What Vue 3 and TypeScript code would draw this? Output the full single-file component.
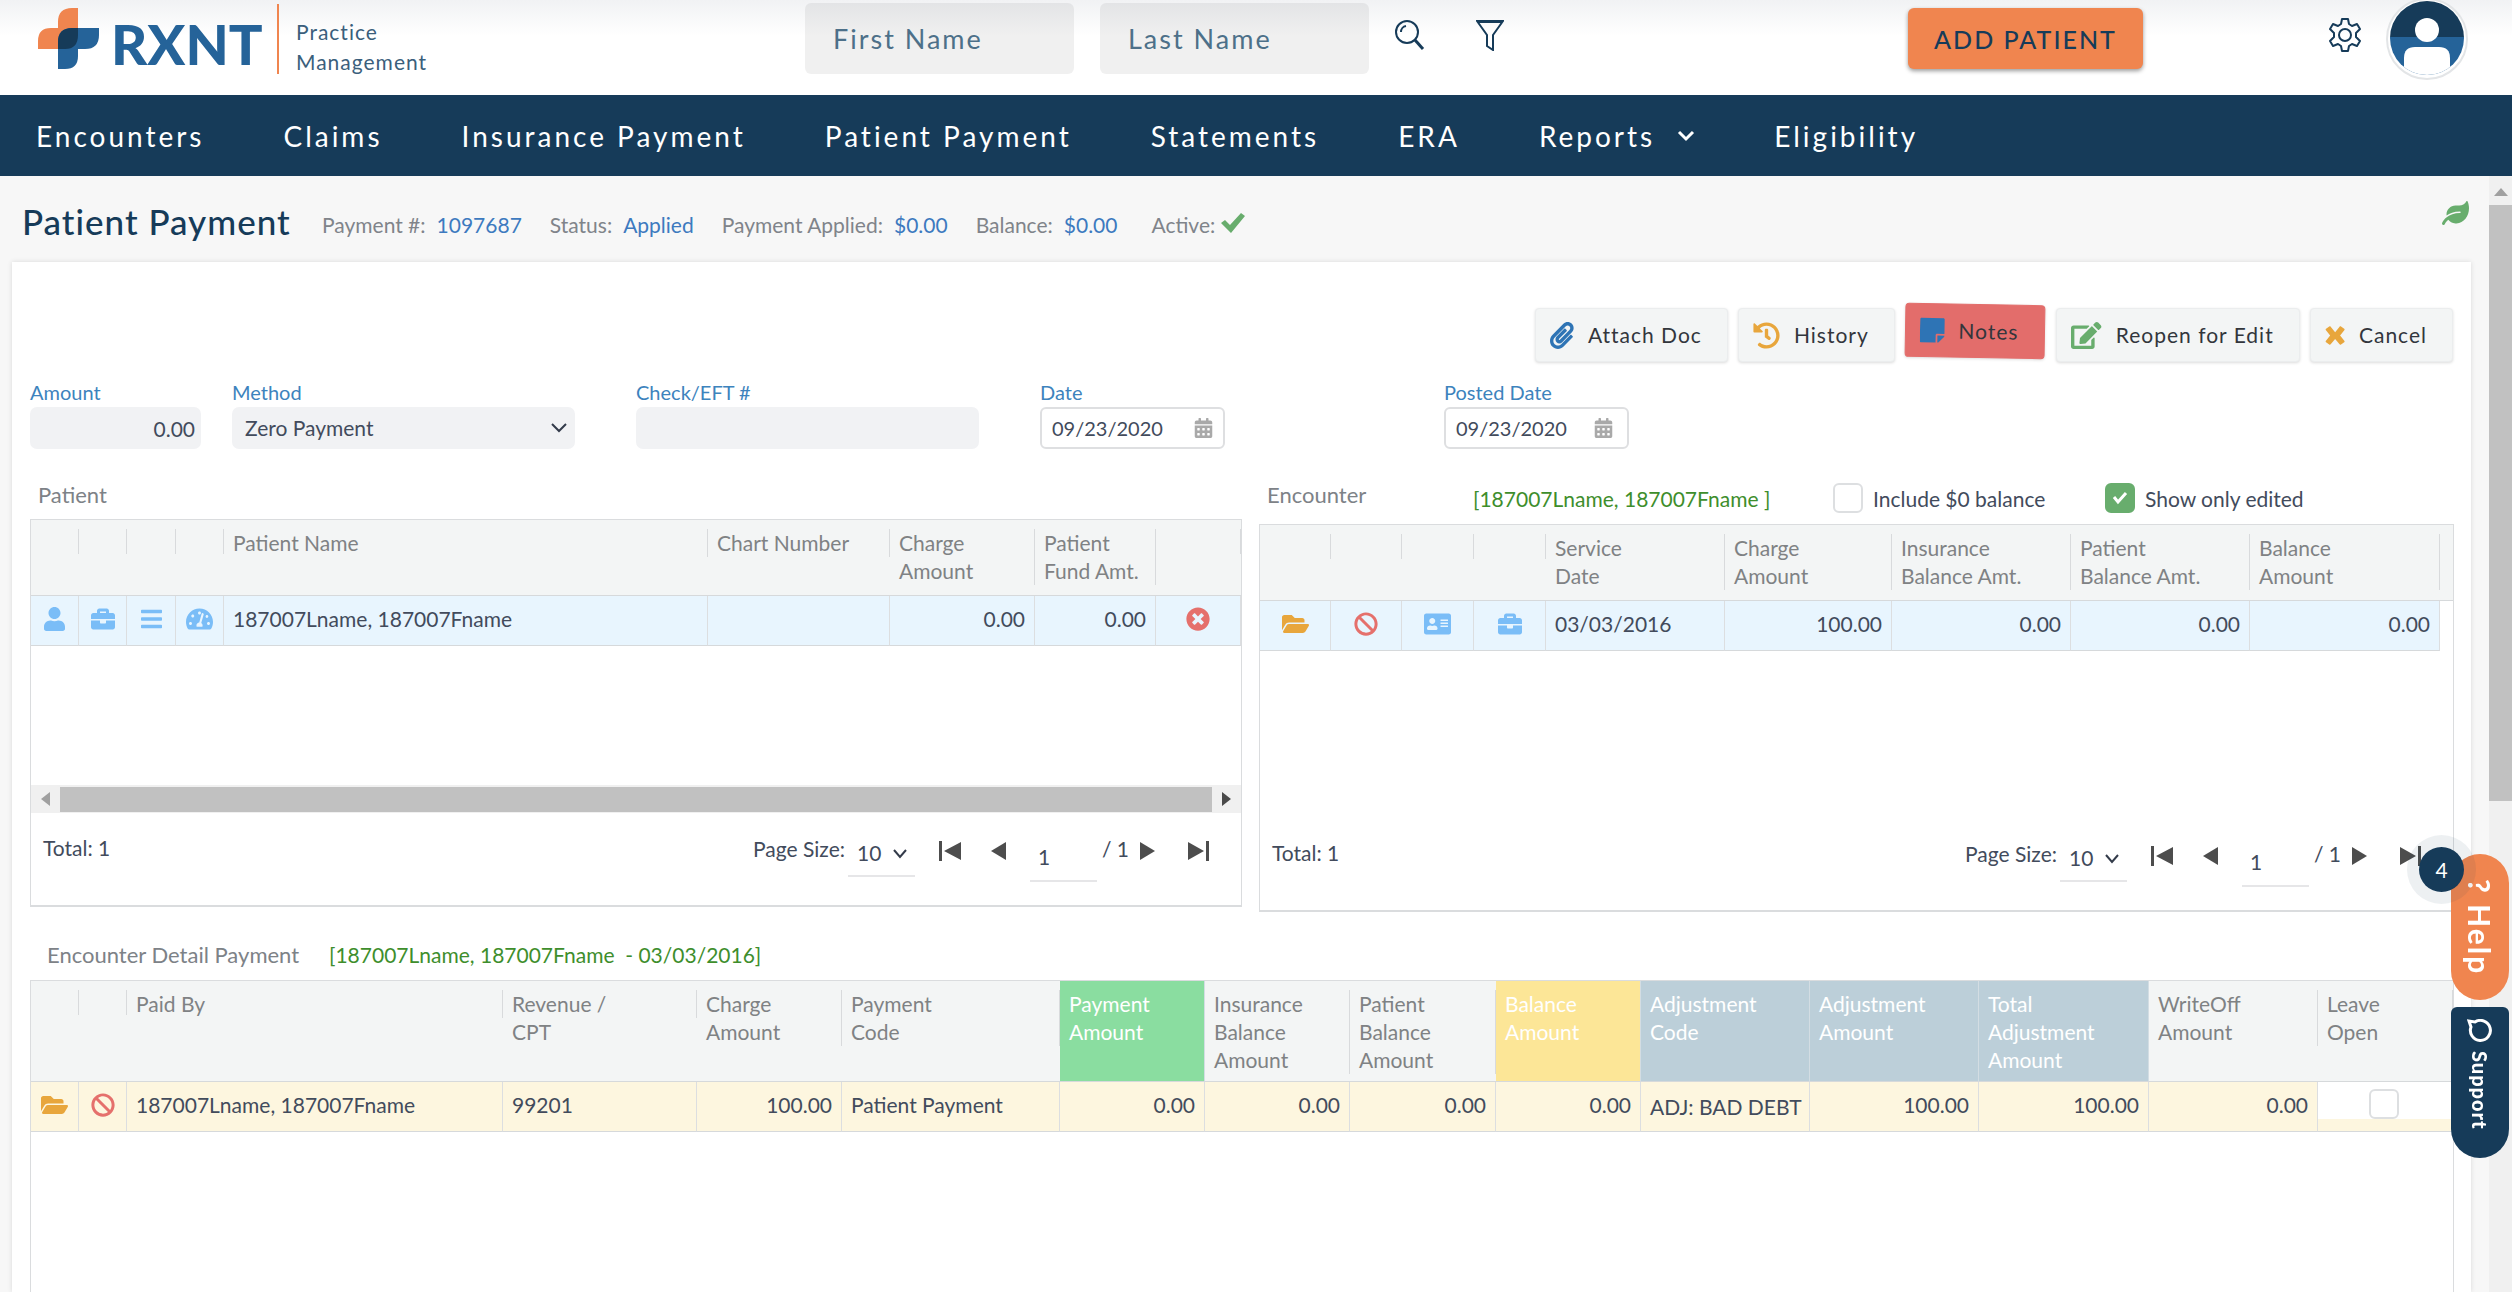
<script setup lang="ts">
import { ref } from 'vue'

interface Glyph {
  w: number
  d: string
}
interface Column {
  lines: string[]
  width?: number
  tone?: string
  short?: boolean
}
interface Cell {
  text?: string
  icon?: string
  tone?: string
  label?: string
  num?: boolean
  low?: boolean
  check?: boolean
}

const dot = (x: number, y: number) =>
  `M${x} ${y + 12}c0-6.6 5.4-12 12-12h40c6.6 0 12 5.4 12 12v40c0 6.6-5.4 12-12 12h-40c-6.6 0-12-5.4-12-12z`

const glyphs: Record<string, Glyph> = {
  user: { w: 448, d: 'M224 256c70.7 0 128-57.3 128-128S294.7 0 224 0 96 57.3 96 128s57.3 128 128 128zm89.6 32h-16.7c-22.2 10.2-46.9 16-72.9 16s-50.6-5.8-72.9-16h-16.7C60.2 288 0 348.2 0 422.4V464c0 26.5 21.5 48 48 48h352c26.5 0 48-21.5 48-48v-41.6c0-74.2-60.2-134.4-134.4-134.4z' },
  briefcase: { w: 512, d: 'M320 336c0 8.84-7.16 16-16 16h-96c-8.84 0-16-7.16-16-16v-48H0v144c0 25.6 22.4 48 48 48h416c25.6 0 48-22.4 48-48V288H320v48zm144-208h-80V80c0-25.6-22.4-48-48-48H176c-25.6 0-48 22.4-48 48v48H48c-25.6 0-48 22.4-48 48v80h512v-80c0-25.6-22.4-48-48-48zm-144 0H192V96h128v32z' },
  bars: { w: 448, d: 'M16 60h416c9 0 16 7 16 16v40c0 9-7 16-16 16H16c-9 0-16-7-16-16V76c0-9 7-16 16-16zm0 160h416c9 0 16 7 16 16v40c0 9-7 16-16 16H16c-9 0-16-7-16-16v-40c0-9 7-16 16-16zm0 160h416c9 0 16 7 16 16v40c0 9-7 16-16 16H16c-9 0-16-7-16-16v-40c0-9 7-16 16-16z' },
  gauge: { w: 576, d: 'M288 32C129 32 0 161 0 320c0 53 14 102 39 145 6 9 16 15 28 15h442c12 0 22-6 28-15 25-43 39-92 39-145C576 161 447 32 288 32zm0 64c18 0 32 14 32 32s-14 32-32 32-32-14-32-32 14-32 32-32zM96 384c-18 0-32-14-32-32s14-32 32-32 32 14 32 32-14 32-32 32zm48-160c-18 0-32-14-32-32s14-32 32-32 32 14 32 32-14 32-32 32zm203 196H229c-4-8-6-18-6-28 0-34 26-62 59-64l52-182c4-12 16-19 28-15s18 16 15 28l-52 182c17 12 29 30 29 51 0 10-3 20-7 28zm71-218c0-18 12-32 28-32s30 14 30 32-14 30-30 30-28-12-28-30zm62 182c-18 0-32-14-32-32s14-32 32-32 32 14 32 32-14 32-32 32z' },
  remove: { w: 512, d: 'M256 8C119 8 8 119 8 256s111 248 248 248 248-111 248-248S393 8 256 8zm121.6 313.1c4.7 4.7 4.7 12.3 0 17L338 377.6c-4.7 4.7-12.3 4.7-17 0L256 312l-65.1 65.6c-4.7 4.7-12.3 4.7-17 0L134.4 338c-4.7-4.7-4.7-12.3 0-17l65.6-65-65.6-65.1c-4.7-4.7-4.7-12.3 0-17l39.6-39.6c4.7-4.7 12.3-4.7 17 0l65 65.7 65.1-65.6c4.7-4.7 12.3-4.7 17 0l39.6 39.6c4.7 4.7 4.7 12.3 0 17L312 256l65.6 65.1z' },
  folder: { w: 576, d: 'M572.694 292.093L500.27 416.248A63.997 63.997 0 0 1 444.989 448H45.025c-18.523 0-30.064-20.093-20.731-36.093l72.424-124.155A64 64 0 0 1 152 256h399.964c18.523 0 30.064 20.093 20.73 36.093zM152 224h328v-48c0-26.51-21.49-48-48-48H272l-64-64H48C21.49 64 0 85.49 0 112v278.046l69.077-118.418C86.214 242.25 117.989 224 152 224z' },
  ban: { w: 512, d: 'M256 8C119.034 8 8 119.033 8 256s111.034 248 248 248 248-111.034 248-248S392.967 8 256 8zm130.108 117.892c65.448 65.448 70 165.481 20.677 235.637L150.47 105.216c70.204-49.356 170.226-44.735 235.638 20.676zM125.892 386.108c-65.448-65.448-70-165.481-20.677-235.637L361.53 406.784c-70.203 49.356-170.226 44.736-235.638-20.676z' },
  card: { w: 576, d: 'M528 32H48C21 32 0 53 0 80v352c0 27 21 48 48 48h480c27 0 48-21 48-48V80c0-27-21-48-48-48zM176 128c35 0 64 29 64 64s-29 64-64 64-64-29-64-64 29-64 64-64zm112 237c0 10-10 19-22 19H86c-12 0-22-9-22-19v-19c0-32 30-58 67-58h5c12 5 26 8 40 8s28-3 40-8h5c37 0 67 26 67 58zm224-53c0 5-3 8-8 8H360c-5 0-8-3-8-8v-16c0-5 3-8 8-8h144c5 0 8 3 8 8zm0-64c0 5-3 8-8 8H360c-5 0-8-3-8-8v-16c0-5 3-8 8-8h144c5 0 8 3 8 8zm0-64c0 5-3 8-8 8H360c-5 0-8-3-8-8v-16c0-5 3-8 8-8h144c5 0 8 3 8 8z' },
  clip: { w: 448, d: 'M43.246 466.142c-58.43-60.289-57.341-157.511 1.386-217.581L254.392 34c44.316-45.332 116.351-45.336 160.671 0 43.89 44.894 43.943 117.329 0 162.276L232.214 383.128c-29.855 30.537-78.633 30.111-107.982-.998-28.275-29.97-27.368-77.473 1.452-106.953l143.743-146.835c6.182-6.314 16.312-6.422 22.626-.241l22.861 22.379c6.315 6.182 6.422 16.312.241 22.626L171.427 319.927c-4.932 5.045-5.236 13.428-.648 18.292 4.372 4.634 11.245 4.711 15.688.165l182.849-186.851c19.613-20.062 19.613-52.725-.011-72.798-19.189-19.627-49.957-19.637-69.154 0L90.39 293.295c-34.763 35.56-35.299 93.12-1.191 128.313 34.01 35.093 88.985 35.137 123.058.286l172.06-175.999c6.177-6.319 16.307-6.433 22.626-.256l22.877 22.364c6.319 6.177 6.434 16.307.256 22.626l-172.06 175.998c-59.576 60.938-155.943 60.216-214.77-.485z' },
  history: { w: 512, d: 'M504 255.531c.253 136.64-111.18 248.372-247.82 248.468-59.015.042-113.223-20.53-155.822-54.911-11.077-8.94-11.905-25.541-1.839-35.607l11.267-11.267c8.609-8.609 22.353-9.551 31.891-1.984C173.062 425.135 212.781 440 256 440c101.705 0 184-82.311 184-184 0-101.705-82.311-184-184-184-48.814 0-93.149 18.969-126.068 49.932l50.754 50.754c10.08 10.08 2.941 27.314-11.313 27.314H24c-8.837 0-16-7.163-16-16V38.627c0-14.254 17.234-21.393 27.314-11.314l49.372 49.372C129.209 34.136 189.552 8 256 8c136.81 0 247.747 110.78 248 247.531zm-180.912 78.784l9.823-12.63c8.138-10.463 6.253-25.542-4.21-33.679L288 256.349V152c0-13.255-10.745-24-24-24h-16c-13.255 0-24 10.745-24 24v135.651l65.409 50.874c10.463 8.137 25.541 6.253 33.679-4.21z' },
  note: { w: 448, d: 'M312 320h136V56c0-13.3-10.7-24-24-24H24C10.7 32 0 42.7 0 56v400c0 13.3 10.7 24 24 24h264V344c0-13.2 10.8-24 24-24zm129 55l-98 98c-4.5 4.5-10.6 7-17 7h-6V352h128v6.1c0 6.3-2.5 12.4-7 16.9z' },
  edit: { w: 576, d: 'M402.6 83.2l90.2 90.2c3.8 3.8 3.8 10 0 13.8L274.4 405.6l-92.8 10.3c-12.4 1.4-22.9-9.1-21.5-21.5l10.3-92.8L388.8 83.2c3.8-3.8 10-3.8 13.8 0zm162-22.9l-48.8-48.8c-15.2-15.2-39.9-15.2-55.2 0l-35.4 35.4c-3.8 3.8-3.8 10 0 13.8l90.2 90.2c3.8 3.8 10 3.8 13.8 0l35.4-35.4c15.2-15.3 15.2-40 0-55.2zM384 346.2V448H64V128h229.8c3.2 0 6.2-1.3 8.5-3.5l40-40c7.6-7.6 2.2-20.5-8.5-20.5H48C21.5 64 0 85.5 0 112v352c0 26.5 21.5 48 48 48h352c26.5 0 48-21.5 48-48V306.2c0-10.7-12.9-16-20.5-8.5l-40 40c-2.2 2.3-3.5 5.3-3.5 8.5z' },
  cross: { w: 384, d: 'M20 130l60-46c10-8 20-6 28 4l84 104 84-104c8-10 18-12 28-4l60 46c10 8 10 18 2 28l-80 98 80 98c8 10 8 20-2 28l-60 46c-10 8-20 6-28-4l-84-104-84 104c-8 10-18 12-28 4l-60-46c-10-8-10-18-2-28l80-98-80-98c-8-10-8-20 2-28z' },
  calendar: { w: 448, d: `M0 464c0 26.5 21.5 48 48 48h352c26.5 0 48-21.5 48-48V192H0v272z${dot(320, 256)}${dot(320, 384)}${dot(192, 256)}${dot(192, 384)}${dot(64, 256)}${dot(64, 384)}M400 64h-48V16c0-8.8-7.2-16-16-16h-32c-8.8 0-16 7.2-16 16v48H160V16c0-8.8-7.2-16-16-16h-32c-8.8 0-16 7.2-16 16v48H48C21.5 64 0 85.5 0 112v48h448v-48c0-26.5-21.5-48-48-48z` },
  leaf: { w: 576, d: 'M546.2 9.7c-5.6-12.5-21.6-13-28.3-1.2C486.9 62.4 431.4 96 368 96h-80C182 96 96 182 96 288c0 7 .8 13.7 1.5 20.5C161.3 262.8 253.4 224 384 224c8.8 0 16 7.2 16 16s-7.2 16-16 16C132.6 256 26 410.1 2.4 468c-6.6 16.3 1.2 34.9 17.5 41.6 16.4 6.8 35-1.1 41.8-17.3 1.5-3.6 20.9-47.9 71.9-90.6 32.4 43.9 94 85.8 174.9 77.2C465.5 467.5 576 326.7 576 154.3c0-50.2-10.8-102.2-29.8-144.6z' },
}

const navItems = ['Encounters', 'Claims', 'Insurance Payment', 'Patient Payment', 'Statements', 'ERA', 'Reports', 'Eligibility']

const facts = [
  { label: 'Payment #:', value: '1097687' },
  { label: 'Status:', value: 'Applied' },
  { label: 'Payment Applied:', value: '$0.00' },
  { label: 'Balance:', value: '$0.00' },
]

const actions = [
  { text: 'Attach Doc', icon: 'clip', tone: 'blue' },
  { text: 'History', icon: 'history', tone: 'amber' },
  { text: 'Notes', icon: 'note', tone: 'blue', alert: true },
  { text: 'Reopen for Edit', icon: 'edit', tone: 'green' },
  { text: 'Cancel', icon: 'cross', tone: 'amber' },
]

const patientColumns: Column[] = [
  { lines: [], width: 48 },
  { lines: [], width: 48 },
  { lines: [], width: 49 },
  { lines: [], width: 48 },
  { lines: ['Patient Name'] },
  { lines: ['Chart Number'], width: 182 },
  { lines: ['Charge', 'Amount'], width: 145 },
  { lines: ['Patient', 'Fund Amt.'], width: 121 },
  { lines: [], width: 85 },
]
const patientRow: Cell[] = [
  { icon: 'user', tone: 'sky', label: 'Patient' },
  { icon: 'briefcase', tone: 'sky', label: 'Case' },
  { icon: 'bars', tone: 'sky', label: 'Details' },
  { icon: 'gauge', tone: 'sky', label: 'Dashboard' },
  { text: '187007Lname, 187007Fname' },
  { text: '' },
  { text: '0.00', num: true },
  { text: '0.00', num: true },
  { icon: 'remove', tone: 'red', label: 'Remove' },
]

const encounterColumns: Column[] = [
  { lines: [], width: 71 },
  { lines: [], width: 71 },
  { lines: [], width: 72 },
  { lines: [], width: 72 },
  { lines: ['Service', 'Date'], width: 179 },
  { lines: ['Charge', 'Amount'], width: 167 },
  { lines: ['Insurance', 'Balance Amt.'], width: 179 },
  { lines: ['Patient', 'Balance Amt.'], width: 179 },
  { lines: ['Balance', 'Amount'] },
]
const encounterRow: Cell[] = [
  { icon: 'folder', tone: 'amber', label: 'Open' },
  { icon: 'ban', tone: 'red', label: 'Void' },
  { icon: 'card', tone: 'sky', label: 'Insurance card' },
  { icon: 'briefcase', tone: 'sky', label: 'Case' },
  { text: '03/03/2016' },
  { text: '100.00', num: true },
  { text: '0.00', num: true },
  { text: '0.00', num: true },
  { text: '0.00', num: true },
]

const detailColumns: Column[] = [
  { lines: [], width: 48 },
  { lines: [], width: 48 },
  { lines: ['Paid By'] },
  { lines: ['Revenue /', 'CPT'], width: 194, short: true },
  { lines: ['Charge', 'Amount'], width: 145 },
  { lines: ['Payment', 'Code'], width: 218 },
  { lines: ['Payment', 'Amount'], width: 145, tone: 'mint' },
  { lines: ['Insurance', 'Balance', 'Amount'], width: 145 },
  { lines: ['Patient', 'Balance', 'Amount'], width: 146 },
  { lines: ['Balance', 'Amount'], width: 145, tone: 'sun' },
  { lines: ['Adjustment', 'Code'], width: 169, tone: 'steel' },
  { lines: ['Adjustment', 'Amount'], width: 169, tone: 'steel' },
  { lines: ['Total', 'Adjustment', 'Amount'], width: 170, tone: 'steel' },
  { lines: ['WriteOff', 'Amount'], width: 169 },
  { lines: ['Leave', 'Open'], width: 135 },
]
const detailRow: Cell[] = [
  { icon: 'folder', tone: 'amber', label: 'Open' },
  { icon: 'ban', tone: 'red', label: 'Void' },
  { text: '187007Lname, 187007Fname' },
  { text: '99201' },
  { text: '100.00', num: true },
  { text: 'Patient Payment' },
  { text: '0.00', num: true },
  { text: '0.00', num: true },
  { text: '0.00', num: true },
  { text: '0.00', num: true },
  { text: 'ADJ: BAD DEBT', low: true },
  { text: '100.00', num: true },
  { text: '100.00', num: true },
  { text: '0.00', num: true },
  { check: true },
]

const panels = [
  { id: 'patient', title: 'Patient', columns: patientColumns, row: patientRow },
  { id: 'encounter', title: 'Encounter', columns: encounterColumns, row: encounterRow },
]

const firstName = ref('')
const lastName = ref('')
const amount = ref('0.00')
const checkNumber = ref('')
const date = ref('09/23/2020')
const postedDate = ref('09/23/2020')
const includeZero = ref(false)
const onlyEdited = ref(true)
const leaveOpen = ref(false)
const page = ref<Record<string, string>>({ patient: '1', encounter: '1' })
</script>

<template>
  <div class="app">
    <header class="top">
      <div class="brand">
        <svg class="mark" viewBox="0 0 61 61" aria-hidden="true">
          <path fill="#f0854f" d="M20 20V14Q20 0 34 0H40V41H0V33Q0 20 13 20Z" />
          <path fill="#256399" d="M34 20H61V27Q61 41 47 41H40V48Q40 61 27 61H20V34Q20 20 34 20Z" />
          <path fill="#163b59" d="M34 20H40V27Q40 41 27 41H20V34Q20 20 34 20Z" />
        </svg>
        <span class="wordmark">RXNT</span>
        <span class="product">Practice<br />Management</span>
      </div>
      <form class="search" @submit.prevent>
        <input v-model="firstName" type="text" placeholder="First Name" aria-label="First Name" />
        <input v-model="lastName" type="text" placeholder="Last Name" aria-label="Last Name" />
        <button class="plain find" type="submit" aria-label="Search">
          <svg width="30" height="30" viewBox="0 0 30 30" fill="none" stroke="#163b59" stroke-width="2">
            <circle cx="12" cy="12" r="11" />
            <path d="M6 12a6 6 0 0 1 5-6" />
            <path stroke-width="3" d="M20 20l8 9" />
          </svg>
        </button>
        <button class="plain" type="button" aria-label="Filter">
          <svg width="28" height="32" viewBox="0 0 28 32" fill="none" stroke="#163b59" stroke-width="2">
            <path d="M1 2H27L17 16V31L11 27V16Z" />
            <path d="M2 3H26" />
          </svg>
        </button>
      </form>
      <button class="add" type="button">ADD PATIENT</button>
      <button class="plain gear" type="button" aria-label="Settings">
        <svg width="34" height="36" viewBox="0 0 34 36" fill="none" stroke="#163b59" stroke-width="2" stroke-linejoin="round">
          <path d="M14 2h6l1 5 3 2 5-2 3 5-4 4v4l4 4-3 5-5-2-3 2-1 5h-6l-1-5-3-2-5 2-3-5 4-4v-4l-4-4 3-5 5 2 3-2z" />
          <circle cx="17" cy="18" r="6" />
        </svg>
      </button>
      <button class="plain avatar" type="button" aria-label="Account">
        <svg width="82" height="82" viewBox="0 0 82 82">
          <defs><clipPath id="face"><circle cx="41" cy="40" r="37" /></clipPath></defs>
          <circle cx="41" cy="41" r="40" fill="#fff" stroke="#e3e5e7" stroke-width="2" />
          <g clip-path="url(#face)">
            <rect width="82" height="39" fill="#163b59" />
            <rect y="39" width="82" height="43" fill="#256399" />
            <circle cx="41" cy="32" r="12" fill="#fff" />
            <path fill="#fff" d="M18 82V60q0-11 11-11h24q11 0 11 11v22z" />
          </g>
        </svg>
      </button>
    </header>

    <nav class="nav">
      <a v-for="item in navItems" :key="item" href="#">
        {{ item }}
        <svg v-if="item === 'Reports'" width="18" height="12" viewBox="0 0 18 12" fill="none" stroke="#fff" stroke-width="3">
          <path d="M2 2l7 7 7-7" />
        </svg>
      </a>
    </nav>

    <div class="body">
      <main class="content">
        <div class="heading">
          <h1>Patient Payment</h1>
          <dl class="facts">
            <div v-for="fact in facts" :key="fact.label">
              <dt>{{ fact.label }}</dt>
              <dd>{{ fact.value }}</dd>
            </div>
            <div class="active">
              <dt>Active:</dt>
              <dd>
                <svg width="26" height="20" viewBox="0 0 26 20" role="img" aria-label="Yes" fill="#68ad6d">
                  <path d="M1 10l4-3 5 5L21 0l4 3-14 17z" />
                </svg>
              </dd>
            </div>
          </dl>
          <svg class="leaf green" viewBox="0 0 576 512" aria-hidden="true"><path :d="glyphs.leaf.d" /></svg>
        </div>

        <section class="card">
          <div class="toolbar">
            <button v-for="a in actions" :key="a.text" type="button" class="action" :class="{ alert: a.alert }">
              <svg :class="[a.tone, a.icon]" :viewBox="`0 0 ${glyphs[a.icon].w} 512`" aria-hidden="true">
                <path :d="glyphs[a.icon].d" />
              </svg>
              {{ a.text }}
            </button>
          </div>

          <form class="fields" @submit.prevent>
            <div class="field small">
              <label for="amount">Amount</label>
              <input id="amount" v-model="amount" class="box right" type="text" />
            </div>
            <div class="field">
              <label for="method">Method</label>
              <div class="choice">
                <select id="method" class="box"><option>Zero Payment</option></select>
                <svg width="16" height="10" viewBox="0 0 16 10" fill="none" stroke="#333b4a" stroke-width="2"><path d="M1 1l7 7 7-7" /></svg>
              </div>
            </div>
            <div class="field">
              <label for="check">Check/EFT #</label>
              <input id="check" v-model="checkNumber" class="box" type="text" />
            </div>
            <div class="field">
              <label for="date">Date</label>
              <div class="date">
                <input id="date" v-model="date" type="text" />
                <button class="plain" type="button" aria-label="Pick date">
                  <svg class="grey" viewBox="0 0 448 512"><path fill-rule="evenodd" :d="glyphs.calendar.d" /></svg>
                </button>
              </div>
            </div>
            <div class="field">
              <label for="posted">Posted Date</label>
              <div class="date posted">
                <input id="posted" v-model="postedDate" type="text" />
                <button class="plain" type="button" aria-label="Pick posted date">
                  <svg class="grey" viewBox="0 0 448 512"><path fill-rule="evenodd" :d="glyphs.calendar.d" /></svg>
                </button>
              </div>
            </div>
          </form>

          <div class="halves">
            <section v-for="p in panels" :key="p.id" :class="p.id">
              <div class="caption">
                <h2>{{ p.title }}</h2>
                <div v-if="p.id === 'encounter'" class="options">
                  <span class="who">[187007Lname, 187007Fname ]</span>
                  <label class="zero"><input v-model="includeZero" type="checkbox" />Include $0 balance</label>
                  <label><input v-model="onlyEdited" type="checkbox" />Show only edited</label>
                </div>
              </div>
              <div class="grid">
                <div class="tablewrap">
                  <table>
                    <colgroup>
                      <col v-for="(c, i) in p.columns" :key="i" :style="c.width ? { width: c.width + 'px' } : {}" />
                    </colgroup>
                    <thead>
                      <tr>
                        <th v-for="(c, i) in p.columns" :key="i" scope="col">
                          <div :class="{ empty: !c.lines.length }">
                            <span v-for="l in c.lines" :key="l">{{ l }}</span>
                          </div>
                        </th>
                      </tr>
                    </thead>
                    <tbody>
                      <tr>
                        <td v-for="(c, i) in p.row" :key="i" :class="{ num: c.num, ico: c.icon }">
                          <button v-if="c.icon" class="plain" type="button" :aria-label="c.label">
                            <svg :class="c.tone" :viewBox="`0 0 ${glyphs[c.icon].w} 512`"><path :d="glyphs[c.icon].d" /></svg>
                          </button>
                          <template v-else>{{ c.text }}</template>
                        </td>
                      </tr>
                    </tbody>
                  </table>
                </div>
                <div class="space"></div>
                <div v-if="p.id === 'patient'" class="hbar" aria-hidden="true">
                  <svg width="10" height="14" viewBox="0 0 10 14"><path fill="#a0a0a0" d="M9 0v14L0 7z" /></svg>
                  <span></span>
                  <svg width="10" height="14" viewBox="0 0 10 14"><path fill="#4a4a4a" d="M1 0v14l9-7z" /></svg>
                </div>
                <div class="pager">
                  <span class="total">Total: 1</span>
                  <label :for="p.id + '-size'">Page Size:</label>
                  <div class="choice size">
                    <select :id="p.id + '-size'"><option>10</option></select>
                    <svg width="14" height="10" viewBox="0 0 14 10" fill="none" stroke="#333b4a" stroke-width="2"><path d="M1 1l6 7 6-7" /></svg>
                  </div>
                  <button class="plain step first" type="button" aria-label="First page">
                    <svg width="22" height="20" viewBox="0 0 22 20" fill="#4d4d4d"><path d="M0 0h3v20H0zM22 1v18L5 10z" /></svg>
                  </button>
                  <button class="plain step" type="button" aria-label="Previous page">
                    <svg width="22" height="20" viewBox="0 0 22 20" fill="#4d4d4d"><path d="M19 1v18L4 10z" /></svg>
                  </button>
                  <input v-model="page[p.id]" class="page" type="text" aria-label="Page" />
                  <span class="of">/ 1</span>
                  <button class="plain step" type="button" aria-label="Next page">
                    <svg width="22" height="20" viewBox="0 0 22 20" fill="#4d4d4d"><path d="M3 1v18l15-9z" /></svg>
                  </button>
                  <button class="plain step last" type="button" aria-label="Last page">
                    <svg width="22" height="20" viewBox="0 0 22 20" fill="#4d4d4d"><path d="M19 0h3v20h-3zM1 1v18l16-9z" /></svg>
                  </button>
                </div>
              </div>
            </section>
          </div>

          <section class="detail">
            <div class="caption">
              <h2>Encounter Detail Payment</h2>
              <span class="who">[187007Lname, 187007Fname &nbsp;- 03/03/2016]</span>
            </div>
            <div class="grid">
              <table>
                <colgroup>
                  <col v-for="(c, i) in detailColumns" :key="i" :style="c.width ? { width: c.width + 'px' } : {}" />
                </colgroup>
                <thead>
                  <tr>
                    <th v-for="(c, i) in detailColumns" :key="i" scope="col" :class="[c.tone, { filled: c.tone }]">
                      <div :class="{ empty: !c.lines.length, short: c.short }">
                        <span v-for="l in c.lines" :key="l">{{ l }}</span>
                      </div>
                    </th>
                  </tr>
                </thead>
                <tbody>
                  <tr>
                    <td v-for="(c, i) in detailRow" :key="i" :class="{ num: c.num, ico: c.icon, low: c.low, tick: c.check }">
                      <button v-if="c.icon" class="plain" type="button" :aria-label="c.label">
                        <svg :class="c.tone" :viewBox="`0 0 ${glyphs[c.icon].w} 512`"><path :d="glyphs[c.icon].d" /></svg>
                      </button>
                      <input v-else-if="c.check" v-model="leaveOpen" type="checkbox" aria-label="Leave Open" />
                      <template v-else>{{ c.text }}</template>
                    </td>
                  </tr>
                </tbody>
              </table>
            </div>
          </section>
        </section>
      </main>
      <div class="vbar" aria-hidden="true">
        <svg width="14" height="8" viewBox="0 0 14 8"><path fill="#a0a0a0" d="M7 0l7 8H0z" /></svg>
        <span></span>
      </div>
    </div>

    <aside class="float">
      <button class="help" type="button">? Help</button>
      <button class="support" type="button">
        <svg width="26" height="24" viewBox="0 0 26 24" fill="none" stroke="#fff" stroke-width="3">
          <path d="M4 8A10 10 0 1 0 8 3L2 2z" />
        </svg>
        Support
      </button>
      <span class="halo"><span class="count">4</span></span>
    </aside>
  </div>
</template>

<style>
html,
body {
  overflow: hidden;
}
</style>

<style scoped>
* {
  box-sizing: border-box;
}
.app {
  display: flex;
  flex-direction: column;
  height: 100vh;
  font-family: Lato, 'Open Sans', sans-serif;
  font-size: 21px;
  line-height: 28px;
  color: #424b5c;
  background: #f7f7f7;
}
input,
select,
button {
  font: inherit;
  color: inherit;
}
.plain {
  display: flex;
  align-items: center;
  justify-content: center;
  padding: 0;
  border: 0;
  background: none;
}
.blue { fill: #2e74b5; }
.amber { fill: #e8a63c; }
.green { fill: #68ad6d; }
.sky { fill: #7abdf7; }
.red { fill: #e5706c; }
.grey { fill: #a9a9a9; }

.top {
  display: flex;
  align-items: center;
  flex: none;
  height: 95px;
  padding: 0 44px 18px 38px;
  background: linear-gradient(#f1f2f4, #fff 36px);
}
.brand {
  display: flex;
  align-items: center;
  width: 767px;
}
.mark {
  width: 61px;
  height: 61px;
  margin-right: 12px;
}
.wordmark {
  width: 168px;
  height: 70px;
  border-right: 2px solid #f0854f;
  font-size: 56px;
  line-height: 80px;
  font-weight: 900;
  color: #256399;
}
.product {
  margin-left: 17px;
  padding-top: 16px;
  line-height: 30px;
  letter-spacing: 1px;
  color: #3b5f7c;
}
.search {
  display: flex;
  align-items: center;
}
.search input {
  width: 269px;
  height: 71px;
  margin-right: 26px;
  padding: 0 28px;
  border: 0;
  border-radius: 6px;
  background: rgba(0, 0, 0, 0.06);
  font-size: 27px;
  letter-spacing: 2px;
}
.search input::placeholder {
  color: #4d7089;
  opacity: 1;
}
.search .plain {
  padding-bottom: 8px;
}
.find {
  margin-right: 51px;
}
.add {
  width: 235px;
  height: 61px;
  margin-left: auto;
  border: 0;
  border-radius: 6px;
  background: #f0854f;
  box-shadow: 0 2px 4px rgba(0, 0, 0, 0.4);
  color: #163b59;
  font-size: 25px;
  font-weight: 500;
  letter-spacing: 2px;
}
.gear {
  margin-left: 185px;
  padding-bottom: 8px;
}
.avatar {
  margin-left: 24px;
}

.nav {
  display: flex;
  align-items: center;
  flex: none;
  gap: 79px;
  height: 81px;
  padding-left: 36px;
  background: #163b59;
}
.nav a {
  display: flex;
  align-items: center;
  gap: 22px;
  color: #fff;
  font-size: 28px;
  letter-spacing: 3px;
  text-decoration: none;
}

.body {
  display: flex;
  flex: 1;
  min-height: 0;
}
.content {
  display: flex;
  flex-direction: column;
  flex: 1;
  min-width: 0;
  padding: 0 18px 0 12px;
  overflow: hidden;
}
.heading {
  display: flex;
  align-items: center;
  flex: none;
  height: 86px;
  padding: 4px 0 0 10px;
}
h1 {
  margin: 0;
  width: 300px;
  font-size: 35px;
  font-weight: 500;
  letter-spacing: 1px;
  color: #163b59;
}
.facts {
  display: flex;
  gap: 28px;
  margin: 8px 0 0;
}
.facts div {
  display: flex;
  gap: 11px;
}
.facts .active {
  gap: 5px;
  margin-left: 6px;
}
dt {
  color: #80848a;
}
dd {
  margin: 0;
  color: #3d7abf;
}
.leaf {
  width: 27px;
  height: 24px;
  margin: 0 2px 16px auto;
}
.card {
  display: flex;
  flex-direction: column;
  flex: 1;
  padding: 46px 17px 0 18px;
  background: #fff;
  box-shadow: 0 0 5px rgba(0, 0, 0, 0.12);
}
.toolbar {
  display: flex;
  justify-content: flex-end;
  gap: 10px;
  padding-right: 1px;
}
.action {
  display: flex;
  align-items: center;
  gap: 14px;
  height: 54px;
  padding: 0 25px 0 14px;
  border: 1px solid #ebedee;
  border-radius: 4px;
  background: #f3f5f5;
  box-shadow: 0 1px 3px rgba(0, 0, 0, 0.14);
  color: #32363c;
  letter-spacing: 1px;
}
.action svg {
  width: auto;
  height: 27px;
}
.action .note {
  height: 28px;
}
.alert {
  margin-right: 2px;
  border-color: #e36d6b;
  background: #e36d6b;
  transform: translateY(-4px) rotate(1deg);
}

.fields {
  display: grid;
  grid-template-columns: repeat(12, 1fr);
  margin-top: 17px;
}
.field {
  display: flex;
  flex-direction: column;
  grid-column: span 2;
  padding-right: 61px;
}
.field.small {
  grid-column: span 1;
  padding-right: 31px;
}
.field label {
  margin-bottom: 2px;
  color: #3d83bd;
  font-size: 20px;
  line-height: 26px;
}
.box {
  width: 100%;
  height: 42px;
  padding: 0 13px;
  border: 0;
  border-radius: 7px;
  background: #f1f2f4;
}
.right {
  padding: 0 6px;
  text-align: right;
}
.choice {
  position: relative;
}
.choice select {
  appearance: none;
}
.choice svg {
  position: absolute;
  top: 16px;
  right: 8px;
  pointer-events: none;
}
.date {
  display: flex;
  align-items: center;
  width: 185px;
  height: 42px;
  padding: 0 10px;
  border: 2px solid #dedfe1;
  border-radius: 6px;
}
.posted {
  padding-right: 14px;
}
.date input {
  flex: 1;
  min-width: 0;
  padding: 0;
  border: 0;
  background: none;
  font-size: 20px;
}
.date svg {
  width: 19px;
  height: 20px;
}

.halves {
  display: grid;
  grid-template-columns: 1fr 1fr;
  align-items: start;
  margin-top: 32px;
}
.encounter {
  margin-left: 17px;
}
.caption {
  display: flex;
  height: 38px;
  padding-left: 8px;
}
.encounter .caption {
  height: 43px;
}
h2 {
  margin: 0;
  font-size: 22px;
  line-height: 28px;
  font-weight: 400;
  color: #7d8287;
}
.encounter h2 {
  width: 206px;
}
.options {
  display: flex;
  height: 32px;
  align-items: flex-end;
}
.who {
  color: #3e8e2c;
}
.encounter .who {
  width: 360px;
}
.options label {
  display: flex;
  align-items: flex-end;
  gap: 10px;
}
.options .zero {
  width: 272px;
}
input[type='checkbox'] {
  appearance: none;
  width: 30px;
  height: 30px;
  margin: 0;
  border: 2px solid #dddfe1;
  border-radius: 6px;
  background: #fff;
}
input[type='checkbox']:checked {
  border-color: #68ad6d;
  background: #68ad6d
    url("data:image/svg+xml,%3Csvg xmlns='http://www.w3.org/2000/svg' viewBox='0 0 26 26'%3E%3Cpath d='M7 12l4 5 8-9' fill='none' stroke='white' stroke-width='3'/%3E%3C/svg%3E")
    center / contain no-repeat;
}
.grid {
  display: flex;
  flex-direction: column;
  min-height: 388px;
  border: 1px solid #dadcde;
  border-bottom-width: 2px;
}
.encounter .tablewrap {
  padding-right: 13px;
  background: linear-gradient(#f3f5f5 75px, #d6d9db 75px, #d6d9db 76px, #fff 76px);
}
table {
  width: 100%;
  table-layout: fixed;
  border-spacing: 0;
}
th {
  height: 76px;
  padding: 9px 0 0;
  border-bottom: 1px solid #d6d9db;
  background: #f3f5f5;
  color: #7f8284;
  font-weight: 400;
  text-align: left;
  vertical-align: top;
}
th div {
  padding-left: 9px;
  border-right: 1px solid #d8dadc;
}
th div.short {
  height: 28px;
}
th .empty {
  height: 25px;
}
th span {
  display: block;
}
td {
  height: 50px;
  padding: 0 9px 4px;
  border-right: 1px solid #dcdee0;
  border-bottom: 1px solid #d6d9db;
  background: #e8f5fe;
  white-space: nowrap;
}
.num {
  text-align: right;
}
.ico {
  padding: 0 0 3px;
}
.ico .plain {
  width: 100%;
}
.ico svg {
  width: auto;
  height: 24px;
}
.space {
  flex: 1;
}
.hbar {
  display: flex;
  align-items: center;
  gap: 9px;
  height: 28px;
  padding: 0 10px;
  background: #f0f0f0;
}
.hbar span {
  flex: 1;
  height: 25px;
  background: #c1c1c1;
}
.pager {
  display: flex;
  align-items: flex-start;
  height: 92px;
  padding: 22px 19px 0 12px;
}
.total {
  margin-right: auto;
  line-height: 26px;
}
.pager label {
  margin-right: 3px;
}
.choice.size {
  width: 67px;
  height: 42px;
  border-bottom: 2px solid #e6e6e8;
}
.size select {
  width: 100%;
  height: 36px;
  padding: 0 9px;
  border: 0;
  background: none;
}
.size svg {
  top: 14px;
}
.step {
  width: 48px;
  padding-top: 6px;
}
.first {
  margin-left: 11px;
}
.last {
  margin-left: 2px;
}
.page {
  width: 67px;
  height: 47px;
  margin: 0 5px 0 8px;
  padding: 0 8px 3px;
  border: 0;
  border-bottom: 2px solid #e6e6e8;
  background: none;
}
.of {
  width: 22px;
  white-space: nowrap;
}

.detail {
  display: flex;
  flex-direction: column;
  flex: 1;
  margin-top: 29px;
}
.detail .caption {
  gap: 20px;
  height: 39px;
  padding-left: 17px;
}
.detail h2 {
  min-width: 262px;
}
.detail .grid {
  flex: 1;
  min-height: 300px;
  border-bottom: 0;
}
.detail th {
  height: 101px;
}
.detail td {
  background: #fdf6df;
}
.detail .filled {
  border-right: 1px solid #d3dde3;
  color: #fff;
}
.detail .filled div {
  border-right: 0;
}
.detail .mint {
  background: #8adda0;
}
.detail .sun {
  background: #fce697;
}
.detail .steel {
  background: #bccfd9;
}
.detail .low {
  padding-bottom: 0;
}
.detail .tick {
  padding: 7px 0 0 51px;
  background: linear-gradient(#fff 37px, #fdf6df 37px);
  vertical-align: top;
}
.tick input {
  display: block;
}

.vbar {
  display: flex;
  flex-direction: column;
  align-items: center;
  width: 23px;
  padding-top: 12px;
  background: #f0f0f0;
}
.vbar span {
  width: 100%;
  height: 54%;
  margin-top: 9px;
  background: #c1c1c1;
}

.float {
  position: fixed;
  top: 854px;
  right: 3px;
  width: 58px;
}
.float button {
  display: flex;
  align-items: center;
  justify-content: center;
  width: 58px;
  padding: 0;
  border: 0;
  color: #fff;
  writing-mode: vertical-rl;
}
.help {
  height: 146px;
  border-radius: 29px;
  background: #f0854f;
  font-size: 30px;
  font-weight: 700;
  letter-spacing: 2px;
}
.float .support {
  gap: 8px;
  height: 151px;
  margin-top: 7px;
  padding-bottom: 16px;
  border-radius: 6px 6px 29px 29px;
  background: #163b59;
  font-size: 20px;
  font-weight: 900;
  letter-spacing: 1px;
}
.halo {
  position: absolute;
  top: -19px;
  left: -44px;
  display: flex;
  padding: 12px;
  border-radius: 50%;
  background: rgba(22, 59, 89, 0.08);
}
.count {
  width: 45px;
  height: 45px;
  border-radius: 50%;
  background: #163b59;
  color: #fff;
  line-height: 45px;
  text-align: center;
}
</style>
